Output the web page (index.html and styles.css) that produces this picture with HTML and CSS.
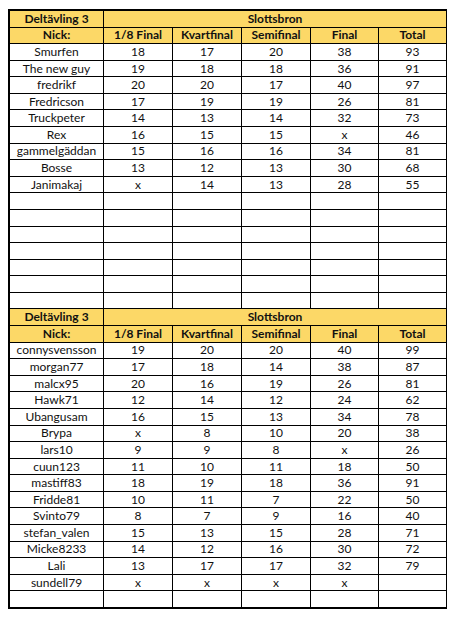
FILE: index.html
```html
<!DOCTYPE html>
<html lang="sv">
<head>
    <meta charset="UTF-8">
    <title>Deltävling 3 - Slottsbron</title>
    <link rel="stylesheet" href="styles.css">
</head>
<body>
    <div class="sheet">
        <!-- Grupp 1 -->
        <div class="cell head">Deltävling 3</div>
        <div class="cell head wide">Slottsbron</div>
        <div class="cell head">Nick:</div>
        <div class="cell head">1/8 Final</div>
        <div class="cell head">Kvartfinal</div>
        <div class="cell head">Semifinal</div>
        <div class="cell head">Final</div>
        <div class="cell head">Total</div>

        <div class="cell">Smurfen</div><div class="cell">18</div><div class="cell">17</div><div class="cell">20</div><div class="cell">38</div><div class="cell">93</div>
        <div class="cell">The new guy</div><div class="cell">19</div><div class="cell">18</div><div class="cell">18</div><div class="cell">36</div><div class="cell">91</div>
        <div class="cell">fredrikf</div><div class="cell">20</div><div class="cell">20</div><div class="cell">17</div><div class="cell">40</div><div class="cell">97</div>
        <div class="cell">Fredricson</div><div class="cell">17</div><div class="cell">19</div><div class="cell">19</div><div class="cell">26</div><div class="cell">81</div>
        <div class="cell">Truckpeter</div><div class="cell">14</div><div class="cell">13</div><div class="cell">14</div><div class="cell">32</div><div class="cell">73</div>
        <div class="cell">Rex</div><div class="cell">16</div><div class="cell">15</div><div class="cell">15</div><div class="cell">x</div><div class="cell">46</div>
        <div class="cell">gammelgäddan</div><div class="cell">15</div><div class="cell">16</div><div class="cell">16</div><div class="cell">34</div><div class="cell">81</div>
        <div class="cell">Bosse</div><div class="cell">13</div><div class="cell">12</div><div class="cell">13</div><div class="cell">30</div><div class="cell">68</div>
        <div class="cell">Janimakaj</div><div class="cell">x</div><div class="cell">14</div><div class="cell">13</div><div class="cell">28</div><div class="cell">55</div>

        <div class="cell"></div><div class="cell"></div><div class="cell"></div><div class="cell"></div><div class="cell"></div><div class="cell"></div>
        <div class="cell"></div><div class="cell"></div><div class="cell"></div><div class="cell"></div><div class="cell"></div><div class="cell"></div>
        <div class="cell"></div><div class="cell"></div><div class="cell"></div><div class="cell"></div><div class="cell"></div><div class="cell"></div>
        <div class="cell"></div><div class="cell"></div><div class="cell"></div><div class="cell"></div><div class="cell"></div><div class="cell"></div>
        <div class="cell"></div><div class="cell"></div><div class="cell"></div><div class="cell"></div><div class="cell"></div><div class="cell"></div>
        <div class="cell"></div><div class="cell"></div><div class="cell"></div><div class="cell"></div><div class="cell"></div><div class="cell"></div>
        <div class="cell"></div><div class="cell"></div><div class="cell"></div><div class="cell"></div><div class="cell"></div><div class="cell"></div>

        <!-- Grupp 2 -->
        <div class="cell head">Deltävling 3</div>
        <div class="cell head wide">Slottsbron</div>
        <div class="cell head">Nick:</div>
        <div class="cell head">1/8 Final</div>
        <div class="cell head">Kvartfinal</div>
        <div class="cell head">Semifinal</div>
        <div class="cell head">Final</div>
        <div class="cell head">Total</div>

        <div class="cell">connysvensson</div><div class="cell">19</div><div class="cell">20</div><div class="cell">20</div><div class="cell">40</div><div class="cell">99</div>
        <div class="cell">morgan77</div><div class="cell">17</div><div class="cell">18</div><div class="cell">14</div><div class="cell">38</div><div class="cell">87</div>
        <div class="cell">malcx95</div><div class="cell">20</div><div class="cell">16</div><div class="cell">19</div><div class="cell">26</div><div class="cell">81</div>
        <div class="cell">Hawk71</div><div class="cell">12</div><div class="cell">14</div><div class="cell">12</div><div class="cell">24</div><div class="cell">62</div>
        <div class="cell">Ubangusam</div><div class="cell">16</div><div class="cell">15</div><div class="cell">13</div><div class="cell">34</div><div class="cell">78</div>
        <div class="cell">Brypa</div><div class="cell">x</div><div class="cell">8</div><div class="cell">10</div><div class="cell">20</div><div class="cell">38</div>
        <div class="cell">lars10</div><div class="cell">9</div><div class="cell">9</div><div class="cell">8</div><div class="cell">x</div><div class="cell">26</div>
        <div class="cell">cuun123</div><div class="cell">11</div><div class="cell">10</div><div class="cell">11</div><div class="cell">18</div><div class="cell">50</div>
        <div class="cell">mastiff83</div><div class="cell">18</div><div class="cell">19</div><div class="cell">18</div><div class="cell">36</div><div class="cell">91</div>
        <div class="cell">Fridde81</div><div class="cell">10</div><div class="cell">11</div><div class="cell">7</div><div class="cell">22</div><div class="cell">50</div>
        <div class="cell">Svinto79</div><div class="cell">8</div><div class="cell">7</div><div class="cell">9</div><div class="cell">16</div><div class="cell">40</div>
        <div class="cell">stefan_valen</div><div class="cell">15</div><div class="cell">13</div><div class="cell">15</div><div class="cell">28</div><div class="cell">71</div>
        <div class="cell">Micke8233</div><div class="cell">14</div><div class="cell">12</div><div class="cell">16</div><div class="cell">30</div><div class="cell">72</div>
        <div class="cell">Lali</div><div class="cell">13</div><div class="cell">17</div><div class="cell">17</div><div class="cell">32</div><div class="cell">79</div>
        <div class="cell">sundell79</div><div class="cell">x</div><div class="cell">x</div><div class="cell">x</div><div class="cell">x</div><div class="cell"></div>

        <div class="cell"></div><div class="cell"></div><div class="cell"></div><div class="cell"></div><div class="cell"></div><div class="cell"></div>
    </div>
</body>
</html>
```

FILE: styles.css
```css
* {
    box-sizing: border-box;
}

body {
    margin: 9px 8px;
    background: #fff;
    font-family: Lato, "Open Sans", sans-serif;
    font-size: 12px;
    color: #111;
}

.sheet {
    display: grid;
    grid-template-columns: 93px 68px 68px 68px 67px 67px;
    grid-template-rows: repeat(36, 1fr);
    gap: 1px;
    width: 440px;
    height: 600px;
    border: 2px solid #000;
    background: #000;
}

.cell {
    display: flex;
    align-items: center;
    justify-content: center;
    background: #fff;
    white-space: nowrap;
    line-height: 1;
}

.head {
    background: #fcd867;
    font-weight: bold;
}

.wide {
    grid-column: span 5;
}
```
